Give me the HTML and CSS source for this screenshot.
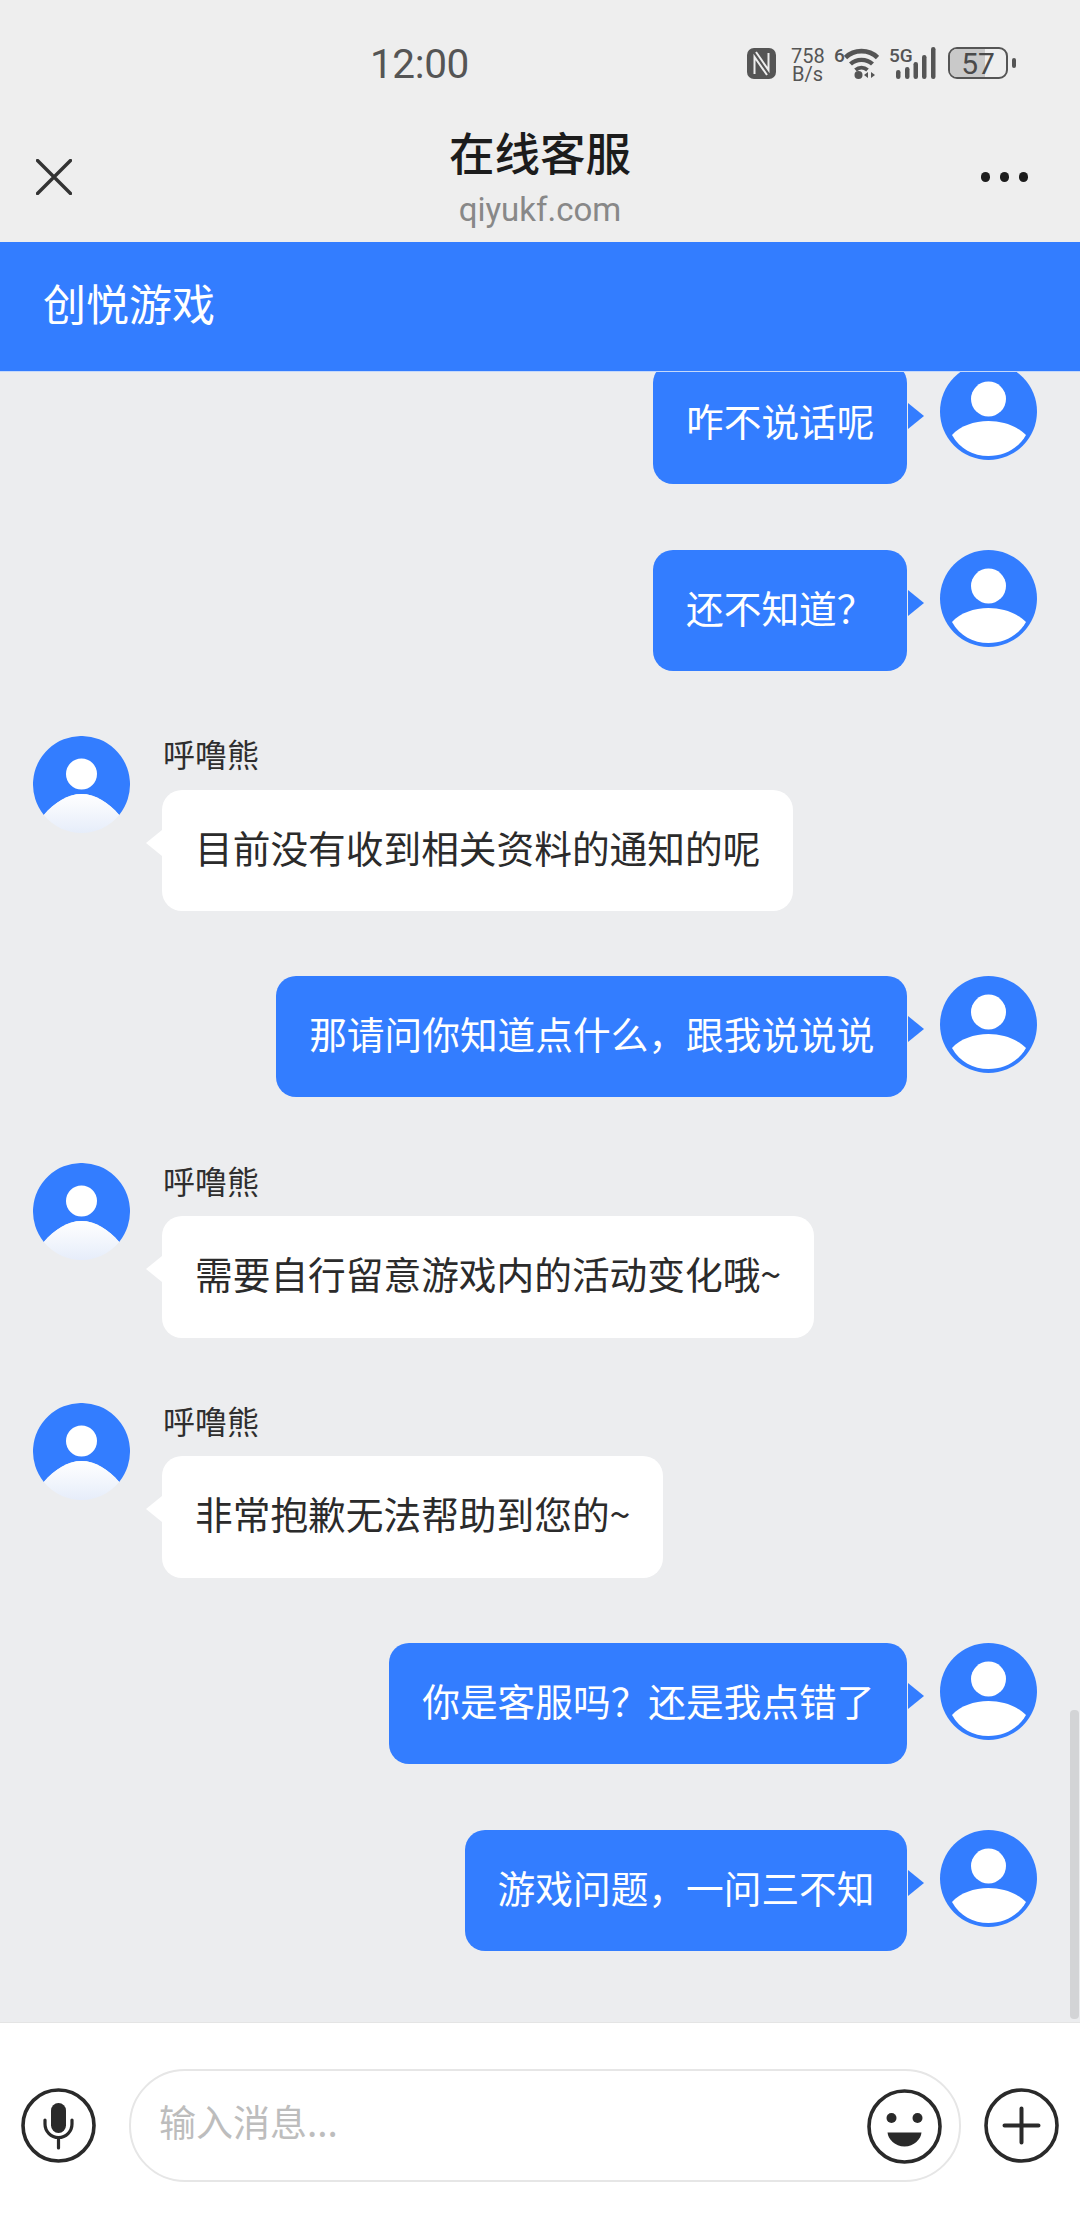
FILE: index.html
```html
<!DOCTYPE html>
<html lang="zh-CN">
<head>
<meta charset="utf-8">
<title>在线客服</title>
<link rel="stylesheet" href="styles.css">
</head>
<body>
<svg class="defs" width="0" height="0" aria-hidden="true">
  <defs>
    <linearGradient id="fade" x1="0" y1="0" x2="0" y2="1">
      <stop offset="0" stop-color="#ffffff"/>
      <stop offset="1" stop-color="#e6edfa"/>
    </linearGradient>
    <symbol id="user-me" viewBox="0 0 97 97">
      <circle cx="48.5" cy="48.5" r="48.5" fill="#337dff"/>
      <circle cx="48.5" cy="36" r="17.5" fill="#fff"/>
      <path d="M12 72C20 63 34 58 48.5 58S77 63 86 72C78 86 64 93 48.5 93S20 86 12 72Z" fill="#fff"/>
    </symbol>
    <symbol id="user-agent" viewBox="0 0 97 97">
      <path d="M10.8 79A48.5 48.5 0 1 1 86.2 79C75 66 62 58 48.5 58S22 66 10.8 79Z" fill="#337dff"/>
      <circle cx="48.5" cy="38" r="15.5" fill="#fff"/>
      <path d="M10.8 79C22 66 35 58 48.5 58S75 66 86.2 79A48.5 48.5 0 0 1 10.8 79Z" fill="url(#fade)"/>
    </symbol>
  </defs>
</svg>

<div class="app">
  <header class="top">
    <div class="status">
      <span class="time">12:00</span>
      <div class="status-icons">
        <svg class="ic-nfc" width="29" height="31" viewBox="0 0 29 31">
          <rect x="0" y="0" width="29" height="31" rx="7" fill="#555"/>
          <path d="M7.5 26V9L20 27M21.5 5V22L9 4" fill="none" stroke="#eee" stroke-width="2"/>
        </svg>
        <div class="speed">758<br>B/s</div>
        <span class="tiny wifi-label">6</span>
        <svg class="ic-wifi" width="35" height="31" viewBox="0 0 35 31">
          <path d="M1.5 9.5C10 1 25 1 33.5 9.5" fill="none" stroke="#555" stroke-width="4.6"/>
          <path d="M6.5 16C12.5 10.5 22.5 10.5 28.5 16" fill="none" stroke="#555" stroke-width="4.4"/>
          <path d="M11.5 22C15 19 20 19 23.5 22" fill="none" stroke="#555" stroke-width="4"/>
          <circle cx="14.5" cy="27" r="4" fill="#555"/>
          <path d="M24 24V30L20 27ZM27 24V30L31 27Z" fill="#555"/>
        </svg>
        <span class="tiny net-label">5G</span>
        <svg class="ic-signal" width="40" height="32" viewBox="0 0 40 32">
          <rect x="0" y="23" width="4.5" height="9" rx="2.2" fill="#555"/>
          <rect x="9" y="20" width="4.5" height="12" rx="2.2" fill="#555"/>
          <rect x="17.5" y="15" width="4.5" height="17" rx="2.2" fill="#555"/>
          <rect x="26" y="8" width="4.5" height="24" rx="2.2" fill="#555"/>
          <rect x="35" y="0" width="4.5" height="32" rx="2.2" fill="#555"/>
        </svg>
        <div class="battery"><span class="battery-fill"></span><span class="battery-num">57</span></div>
        <span class="battery-tip"></span>
      </div>
    </div>
    <nav class="nav">
      <svg class="ic-close" width="36" height="36" viewBox="0 0 36 36">
        <path d="M1.5 1.5L34.5 34.5M34.5 1.5L1.5 34.5" stroke="#333" stroke-width="3.4" stroke-linecap="round"/>
      </svg>
      <div class="title">
        <div class="title-main">在线客服</div>
        <div class="title-sub">qiyukf.com</div>
      </div>
      <div class="more"><i></i><i></i><i></i></div>
    </nav>
  </header>

  <div class="brand">创悦游戏</div>

  <main class="chat">
    <div class="list">
      <div class="row me">
        <div class="bubble">咋不说话呢</div>
        <svg class="avatar"><use href="#user-me"/></svg>
      </div>
      <div class="row me">
        <div class="bubble">还不知道&#xFF1F;</div>
        <svg class="avatar"><use href="#user-me"/></svg>
      </div>
      <div class="row agent">
        <svg class="avatar"><use href="#user-agent"/></svg>
        <div class="body">
          <div class="name">呼噜熊</div>
          <div class="bubble">目前没有收到相关资料的通知的呢</div>
        </div>
      </div>
      <div class="row me">
        <div class="bubble">那请问你知道点什么&#xFF0C;跟我说说说</div>
        <svg class="avatar"><use href="#user-me"/></svg>
      </div>
      <div class="row agent">
        <svg class="avatar"><use href="#user-agent"/></svg>
        <div class="body">
          <div class="name">呼噜熊</div>
          <div class="bubble">需要自行留意游戏内的活动变化哦~</div>
        </div>
      </div>
      <div class="row agent">
        <svg class="avatar"><use href="#user-agent"/></svg>
        <div class="body">
          <div class="name">呼噜熊</div>
          <div class="bubble">非常抱歉无法帮助到您的~</div>
        </div>
      </div>
      <div class="row me">
        <div class="bubble">你是客服吗&#xFF1F;还是我点错了</div>
        <svg class="avatar"><use href="#user-me"/></svg>
      </div>
      <div class="row me">
        <div class="bubble">游戏问题&#xFF0C;一问三不知</div>
        <svg class="avatar"><use href="#user-me"/></svg>
      </div>
    </div>
    <div class="scrollbar"></div>
  </main>

  <footer class="composer">
    <svg class="tool" viewBox="0 0 75 75">
      <circle cx="37.5" cy="37.5" r="35.5" fill="none" stroke="#2a2a2a" stroke-width="3.6"/>
      <rect x="30" y="15" width="15" height="30" rx="7.5" fill="#2a2a2a"/>
      <path d="M24 32V36C24 43.5 30 49.5 37.5 49.5S51 43.5 51 36V32M37.5 49.5V60" fill="none" stroke="#2a2a2a" stroke-width="3.2" stroke-linecap="round"/>
    </svg>
    <div class="input">
      <span class="placeholder">输入消息...</span>
      <svg class="tool" viewBox="0 0 75 75">
        <circle cx="37.5" cy="37.5" r="35.5" fill="none" stroke="#2a2a2a" stroke-width="3.6"/>
        <circle cx="24.5" cy="29" r="5" fill="#2a2a2a"/>
        <circle cx="50.5" cy="29" r="5" fill="#2a2a2a"/>
        <path d="M20.5 43.5H54.5C54 50 47 57.5 37.5 57.5S21 50 20.5 43.5Z" fill="#2a2a2a"/>
      </svg>
    </div>
    <svg class="tool" viewBox="0 0 75 75">
      <circle cx="37.5" cy="37.5" r="35.5" fill="none" stroke="#2a2a2a" stroke-width="3.6"/>
      <path d="M20.5 37.5H54.5M37.5 20.5V54.5" stroke="#2a2a2a" stroke-width="4" stroke-linecap="round"/>
    </svg>
  </footer>
</div>
</body>
</html>
```

FILE: styles.css
```css
* { box-sizing: border-box; }

html, body { margin: 0; padding: 0; }

body {
  font-family: "Noto Sans CJK SC", "Noto Sans", Roboto, sans-serif;
  background: #ecedef;
}

.defs { position: absolute; }

.app {
  width: 1080px;
  height: 2228px;
  display: flex;
  flex-direction: column;
  overflow: hidden;
}

/* status bar and page title */
.top {
  height: 242px;
  background: #eeeeee;
  flex: none;
}

.status {
  height: 94px;
  padding: 48px 64px 0 370px;
  display: flex;
  align-items: flex-start;
  color: #555;
  font-family: Roboto, sans-serif;
}

.time {
  font-size: 40.5px;
  line-height: 32px;
  letter-spacing: -0.4px;
}

.status-icons {
  margin-top: -1px;
  margin-left: auto;
  display: flex;
  align-items: flex-start;
}

.ic-nfc { margin-top: 1px; flex: none; }

.speed {
  margin-left: 15px;
  width: 33px;
  text-align: center;
  font-size: 20px;
  line-height: 18px;
}

.tiny {
  font-size: 19px;
  line-height: 16px;
  font-weight: 500;
}

.wifi-label { margin: 1px 0 0 10px; width: 10px; }

.ic-wifi { margin-top: 1px; flex: none; }

.net-label { margin: 1px 0 0 10px; width: 7px; white-space: nowrap; }

.ic-signal { flex: none; }

.battery {
  position: relative;
  margin-left: 12px;
  width: 60px;
  height: 32px;
  border: 2.5px solid #555;
  border-radius: 9px;
  overflow: hidden;
  display: flex;
  justify-content: center;
  align-items: center;
}

.battery-fill {
  position: absolute;
  left: 0;
  top: 0;
  bottom: 0;
  width: 35px;
  background: #c9c9c9;
}

.battery-num {
  position: relative;
  font-size: 30px;
  line-height: 27px;
  color: #4a4a4a;
}

.battery-tip {
  margin: 11px 0 0 4px;
  width: 4px;
  height: 10px;
  border-radius: 2px;
  background: #555;
}

.nav {
  height: 148px;
  padding: 0 52px 0 52px;
  display: grid;
  grid-template-columns: 1fr auto 1fr;
  align-items: center;
}

.ic-close { margin: 18px 0 0 -16px; }

.title { text-align: center; margin-top: 15px; }

.title-main {
  font-size: 45.5px;
  line-height: 60px;
  font-weight: 500;
  color: #1c1c1c;
}

.title-sub {
  font-family: Roboto, sans-serif;
  font-size: 33px;
  line-height: 40px;
  margin-top: 9px;
  color: #888;
}

.more {
  justify-self: end;
  margin-top: 18px;
  display: flex;
  gap: 9.5px;
}

.more i {
  width: 9.5px;
  height: 9.5px;
  border-radius: 50%;
  background: #1c1c1c;
}

/* blue brand strip */
.brand {
  flex: none;
  height: 130px;
  padding-left: 43px;
  line-height: 120px;
  font-size: 43px;
  color: #fff;
  background: #337dff;
  border-bottom: 1px solid #c5d9fb;
}

/* conversation */
.chat {
  position: relative;
  flex: 1;
  overflow: hidden;
  background: #ecedef;
}

.list {
  margin-top: -9px;
  padding: 0 43px 0 33px;
  display: flex;
  flex-direction: column;
  gap: 65.4px;
}

.row {
  display: flex;
  align-items: flex-start;
}

.row.me { justify-content: flex-end; gap: 33px; }

.row.agent { gap: 32px; }

.avatar {
  width: 97px;
  height: 97px;
  flex: none;
}

.name {
  height: 53.5px;
  padding-left: 1px;
  line-height: 34px;
  font-size: 32px;
  color: #2e2e2e;
}

.bubble {
  position: relative;
  height: 121.2px;
  padding: 0 32.5px 0 33px;
  border-radius: 20px;
  font-size: 37.7px;
  line-height: 113px;
  white-space: nowrap;
}

.me .bubble {
  color: #fff;
  background: #337dff;
}

.agent .bubble {
  color: #2b2b2b;
  background: #fff;
}

.bubble::after {
  content: "";
  position: absolute;
  top: 40px;
  border-top: 13px solid transparent;
  border-bottom: 13px solid transparent;
}

.me .bubble::after {
  right: -17px;
  border-left: 16px solid #337dff;
}

.agent .bubble::after {
  left: -16px;
  border-right: 16px solid #fff;
}

.scrollbar {
  position: absolute;
  right: 1px;
  bottom: 3px;
  width: 9px;
  height: 309px;
  border-radius: 4px;
  background: #d3d4d6;
}

/* message composer */
.composer {
  flex: none;
  height: 206px;
  padding: 46px 21px 0;
  display: flex;
  align-items: flex-start;
  background: #fff;
  border-top: 1px solid #e4e4e4;
}

.tool {
  flex: none;
  width: 75px;
  height: 75px;
  margin-top: 19px;
}

.input {
  flex: none;
  width: 832px;
  height: 113px;
  margin: 0 23px 0 33px;
  padding: 0 17px 0 28px;
  display: flex;
  align-items: flex-start;
  justify-content: space-between;
  border: 2px solid #e6e6e6;
  border-radius: 56px;
}

.input .tool { margin-top: 18px; }

.placeholder {
  font-size: 37px;
  line-height: 100px;
  color: #bdbdbd;
}
```
